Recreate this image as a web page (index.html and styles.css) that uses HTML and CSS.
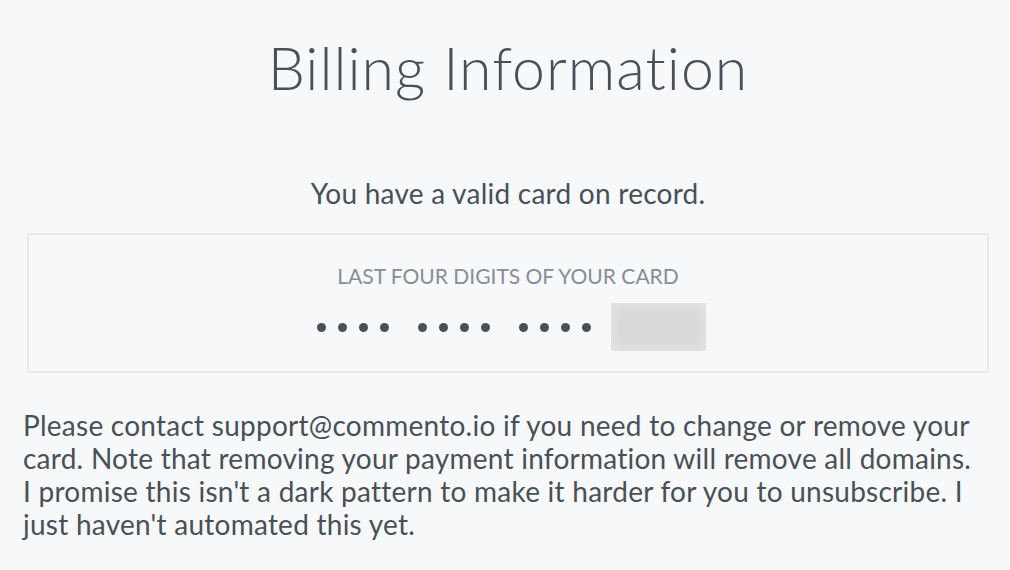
FILE: index.html
```html
<!DOCTYPE html>
<html>
<head>
<meta charset="utf-8">
<link rel="stylesheet" href="styles.css">
</head>
<body>
<main class="page">
  <h1 class="title">Billing Information</h1>
  <p class="status">You have a valid card on record.</p>
  <section class="card">
    <div class="label">LAST FOUR DIGITS OF YOUR CARD</div>
    <div class="digits">
      <span class="group"><i class="dot"></i><i class="dot"></i><i class="dot"></i><i class="dot"></i></span>
      <span class="group"><i class="dot"></i><i class="dot"></i><i class="dot"></i><i class="dot"></i></span>
      <span class="group"><i class="dot"></i><i class="dot"></i><i class="dot"></i><i class="dot"></i></span>
      <span class="blur"></span>
    </div>
  </section>
  <p class="note">Please contact support@commento.io if you need to change or remove your card. Note that removing your payment information will remove all domains. I promise this isn't a dark pattern to make it harder for you to unsubscribe. I just haven't automated this yet.</p>
</main>
</body>
</html>
```
FILE: styles.css
```css
html, body {
  margin: 0;
  background: #f7f8fa;
}
body {
  font-family: Lato, "Noto Sans", sans-serif;
  font-variant-ligatures: none;
  color: #495057;
}
.page {
  width: 1010px;
  height: 570px;
  box-sizing: border-box;
  padding: 0 17px 0 23px;
  overflow: hidden;
}
.title {
  margin: 0;
  padding-top: 28px;
  text-align: center;
  font-weight: 300;
  font-size: 59px;
  letter-spacing: 1px;
  line-height: 80px;
}
.status {
  margin: 0;
  padding-top: 69px;
  text-align: center;
  font-size: 28px;
  letter-spacing: 0.25px;
  line-height: 32px;
}
.card {
  margin: 24px 4px 0;
  height: 140px;
  box-sizing: border-box;
  border: 2px solid #e6e8eb;
  border-radius: 3px;
  padding-top: 27px;
}
.label {
  text-align: center;
  font-size: 21px;
  line-height: 28px;
  color: #868e96;
}
.digits {
  display: flex;
  justify-content: center;
  align-items: center;
  margin-top: 13px;
  padding-left: 6px;
}
.group {
  display: flex;
  gap: 12px;
  margin-right: 29px;
}
.group:nth-child(3) {
  margin-right: 20px;
}
.dot {
  width: 9px;
  height: 9px;
  border-radius: 50%;
  background: #495057;
}
.blur {
  width: 95px;
  height: 48px;
  background: #d8d9db;
  box-shadow: inset 0 0 8px 4px #e2e3e5;
}
.note {
  margin: 36px 0 0;
  padding-right: 14px;
  font-size: 28px;
  letter-spacing: 0.25px;
  line-height: 33px;
}
```
